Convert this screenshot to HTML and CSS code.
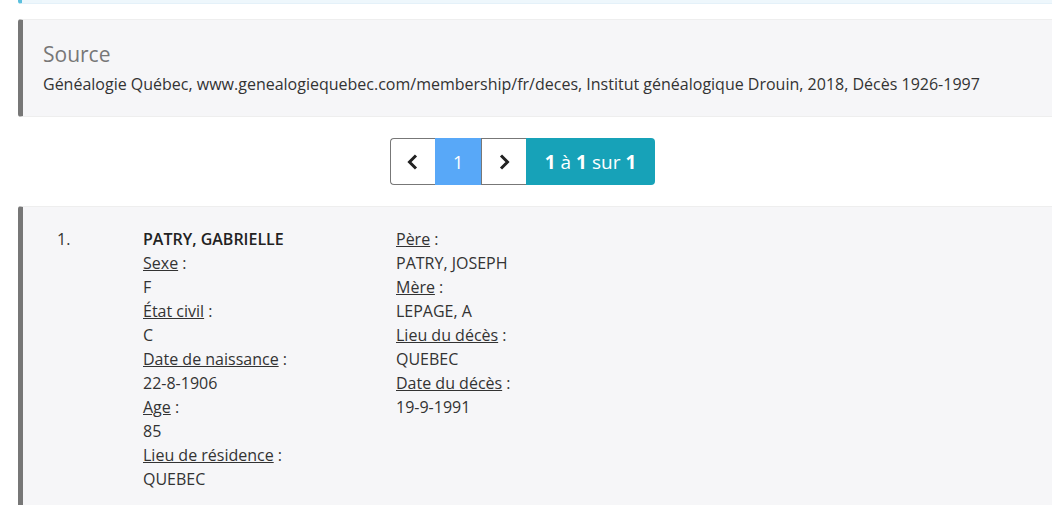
FILE: index.html
```html
<!DOCTYPE html>
<html lang="fr">
<head>
    <meta charset="UTF-8">
    <title>Décès - Résultats</title>
    <link rel="stylesheet" href="styles.css">
</head>
<body>
    <div class="container">
        <div class="callout callout-info"></div>

        <div class="callout source-box">
            <h4>Source</h4>
            <p>Généalogie Québec, www.genealogiequebec.com/membership/fr/deces, Institut généalogique Drouin, 2018, Décès 1926-1997</p>
        </div>

        <div class="pager-wrap">
            <div class="pager">
                <a class="pager-btn" href="#">
                    <svg width="14" height="18" viewBox="0 0 14 18"><path d="M10 2.5 L3.5 9 L10 15.5" fill="none" stroke="#222" stroke-width="3"/></svg>
                </a>
                <a class="pager-btn active" href="#">1</a>
                <a class="pager-btn" href="#">
                    <svg width="14" height="18" viewBox="0 0 14 18"><path d="M4 2.5 L10.5 9 L4 15.5" fill="none" stroke="#222" stroke-width="3"/></svg>
                </a>
                <span class="pager-count"><b>1</b> à <b>1</b> sur <b>1</b></span>
            </div>
        </div>

        <div class="callout record">
            <div class="record-num">1.</div>
            <dl class="record-col">
                <dd class="name">PATRY, GABRIELLE</dd>
                <dt><u>Sexe</u> :</dt>
                <dd>F</dd>
                <dt><u>État civil</u> :</dt>
                <dd>C</dd>
                <dt><u>Date de naissance</u> :</dt>
                <dd>22-8-1906</dd>
                <dt><u>Age</u> :</dt>
                <dd>85</dd>
                <dt><u>Lieu de résidence</u> :</dt>
                <dd>QUEBEC</dd>
            </dl>
            <dl class="record-col">
                <dt><u>Père</u> :</dt>
                <dd>PATRY, JOSEPH</dd>
                <dt><u>Mère</u> :</dt>
                <dd>LEPAGE, A</dd>
                <dt><u>Lieu du décès</u> :</dt>
                <dd>QUEBEC</dd>
                <dt><u>Date du décès</u> :</dt>
                <dd>19-9-1991</dd>
            </dl>
        </div>
    </div>
</body>
</html>
```

FILE: styles.css
```css
body {
    font-family: 'Open Sans', 'Liberation Sans', sans-serif;
    font-size: 16px;
    line-height: 24px;
    color: #333;
    margin: 0;
    background-color: #fff;
    overflow: hidden;
}
.container {
    padding: 0 25px 0 18px;
}
.callout {
    margin-right: -40px;
    border-left: 5px solid #777;
    border-top: 1px solid #eee;
    border-bottom: 1px solid #eee;
    border-radius: 3px;
    background-color: #f6f6f8;
}
.callout-info {
    height: 3px;
    border-left: 4px solid #5bc0de;
    border-top: none;
    border-bottom: 1px solid #e4f1f9;
    border-radius: 0 0 0 3px;
    background-color: #eef7fc;
}
.source-box {
    margin-top: 15px;
    padding: 19px 20px 20px;
}
.source-box h4 {
    margin: 0 0 3px;
    font-size: 21px;
    font-weight: 400;
    line-height: 30px;
    color: #777;
}
.source-box p {
    margin: 0;
}
.pager-wrap {
    display: flex;
    justify-content: center;
    margin: 21px 0 21px;
}
.pager {
    display: flex;
    height: 47px;
}
.pager-btn {
    display: flex;
    align-items: center;
    justify-content: center;
    width: 44px;
    border: 1px solid #777;
    border-right: none;
    background-color: #fff;
    color: #fff;
    text-decoration: none;
    font-size: 18px;
}
.pager-btn:first-child {
    border-radius: 4px 0 0 4px;
}
.pager-btn.active {
    width: 45px;
    background-color: #58a8f8;
    border-color: #58a8f8;
}
.pager-count {
    display: flex;
    align-items: center;
    padding: 0 19px;
    background-color: #17a2b8;
    color: #fff;
    font-size: 19px;
    border-radius: 0 4px 4px 0;
}
.pager-count b {
    font-weight: 700;
    margin: 0 5px;
}
.pager-count b:first-child {
    margin-left: 0;
}
.pager-count b:last-child {
    margin-right: 0;
}
.record {
    display: flex;
    padding: 20px 20px 20px 34px;
    min-height: 320px;
}
.record-num {
    width: 86px;
}
.record-col {
    margin: 0;
    width: 253px;
}
.record-col dt,
.record-col dd {
    margin: 0;
}
.record-col .name {
    font-weight: 600;
    color: #222;
}
```
